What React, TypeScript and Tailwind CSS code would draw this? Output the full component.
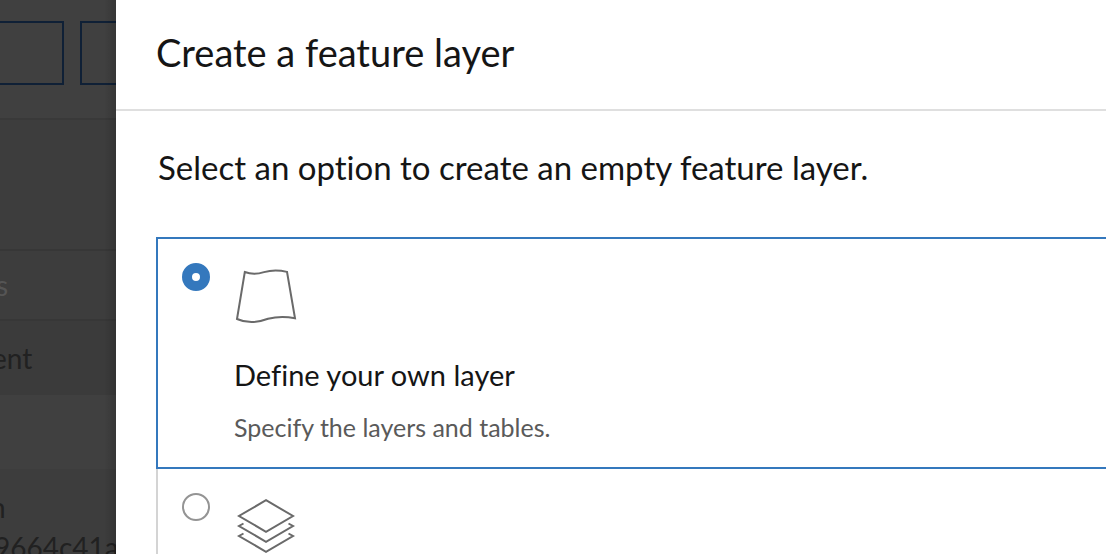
import { useState } from "react";
import type { ReactNode } from "react";

function SheetIcon() {
  return (
    <svg width="64" height="64" viewBox="0 0 64 64" fill="none" stroke="#6a6a6a" strokeWidth="2" aria-hidden="true">
      <path d="M10.800 9C17 11.300 23 11.300 30 9.100C38 6.800 46 7.200 53 8.900L61 55.300C52 53.500 43 53.500 34 55.800C25 59.200 14 61 3 56Z" />
    </svg>
  );
}

function StackIcon() {
  return (
    <svg width="64" height="64" viewBox="0 0 64 64" fill="none" stroke="#6a6a6a" strokeWidth="2" aria-hidden="true">
      <path d="M32 7.200L59 23L32 38.800L5 23Z" />
      <path d="M9.500 30.500L5 33L32 48.800L59 33L54.500 30.500" />
      <path d="M9.500 40.500L5 43L32 58.800L59 43L54.500 40.500" />
    </svg>
  );
}

type OptionProps = {
  id: string;
  title: string;
  detail: string;
  icon: ReactNode;
  selected: boolean;
  onSelect: () => void;
};

function Option({ id, title, detail, icon, selected, onSelect }: OptionProps) {
  return (
    <label
      htmlFor={id}
      className={
        "flex shrink-0 items-start gap-6 border-l-2 pt-6 pb-6 pl-6 " +
        (selected ? "border-y-2 border-[#3478bd]" : "border-b-2 border-[#d4d4d4]")
      }
    >
      <input
        id={id}
        type="radio"
        name="layer-source"
        aria-label={title ? undefined : id}
        checked={selected}
        onChange={onSelect}
        className="size-7 shrink-0 appearance-none rounded-full border-2 border-[#949494] bg-white checked:border-10 checked:border-[#3478bd]"
      />
      <span className="flex flex-col">
        {icon}
        <span className="mt-7 text-[29px] leading-10 text-[#151515]">{title}</span>
        <span className="mt-4 text-[25px] leading-8 text-[#5a5a5a]">{detail}</span>
      </span>
    </label>
  );
}

function PageBehind() {
  return (
    <div aria-hidden="true" className="relative flex w-29 shrink-0 flex-col overflow-hidden bg-[#3d3d3d] text-[28px] whitespace-nowrap text-[#212121]">
      <div className="flex h-30 shrink-0 gap-4 border-b-2 border-[#393939] bg-[#404040] pt-[21px]">
        <div className="h-16 w-16 shrink-0 border-2 border-l-0 border-[#0f2036]" />
        <div className="h-16 w-16 shrink-0 border-2 border-[#0f2036]" />
      </div>
      <div className="h-[131px] shrink-0 border-b-2 border-[#373737]" />
      <div className="flex h-[70px] shrink-0 items-center border-b-2 border-[#373737] text-[#555555]">
        <span className="-ml-1">s</span>
      </div>
      <div className="flex h-[74px] shrink-0 items-center bg-[#3b3b3b]">
        <span className="-ml-2">ent</span>
      </div>
      <div className="h-[74px] shrink-0 bg-[#404040]" />
      <div className="shrink-0 pt-[18px] leading-[40px]">
        <p className="-ml-2.5">n</p>
        <p className="-ml-1.5">9664c41a</p>
      </div>
      <div className="absolute inset-y-0 right-0 w-3 bg-linear-to-r from-transparent to-black/15" />
    </div>
  );
}

export default function App() {
  const [choice, setChoice] = useState("define");
  return (
    <div className="flex h-screen overflow-hidden bg-white font-['Lato',sans-serif] [font-variant-ligatures:none]">
      <PageBehind />
      <main role="dialog" aria-labelledby="dialog-title" className="flex min-w-0 flex-1 flex-col overflow-hidden bg-white">
        <header className="shrink-0 border-b-2 border-[#dfdfdf] px-10 pt-7 pb-8">
          <h1 id="dialog-title" className="text-[38px] leading-[49px] text-[#151515]">
            Create a feature layer
          </h1>
        </header>
        <fieldset className="flex flex-col pt-9 pl-10">
          <legend className="contents">
            <span className="pb-[50px] pl-0.5 text-[33px] leading-10 text-[#151515]">
              Select an option to create an empty feature layer.
            </span>
          </legend>
          <Option
            id="define"
            title="Define your own layer"
            detail="Specify the layers and tables."
            icon={<SheetIcon />}
            selected={choice === "define"}
            onSelect={() => setChoice("define")}
          />
          <Option
            id="existing"
            title=""
            detail=""
            icon={<StackIcon />}
            selected={choice === "existing"}
            onSelect={() => setChoice("existing")}
          />
        </fieldset>
      </main>
    </div>
  );
}
